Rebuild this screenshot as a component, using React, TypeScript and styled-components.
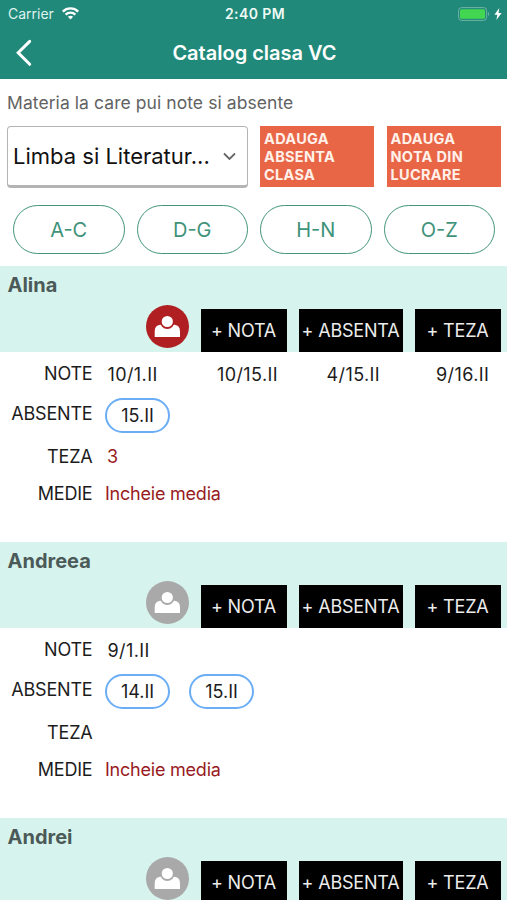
import React from 'react';
import styled, { createGlobalStyle } from 'styled-components';

const GlobalStyle = createGlobalStyle`
  * { box-sizing: border-box; }
  body {
    margin: 0;
    background: #fff;
    font-family: Inter, 'Liberation Sans', sans-serif;
    color: #1c1c1c;
  }
  button { font-family: inherit; cursor: pointer; }
`;

const Screen = styled.div`
  width: 507px;
  height: 900px;
  overflow: hidden;
`;

const Header = styled.header`
  height: 79px;
  background: #218979;
  color: #fff;
`;

const StatusBar = styled.div`
  display: grid;
  grid-template-columns: 1fr auto 1fr;
  align-items: center;
  height: 27px;
  padding: 0 5px 0 8px;
  font-size: 14px;
  line-height: 27px;
`;

const Carrier = styled.div`
  display: flex;
  align-items: center;
  gap: 8px;
  color: #dff3ee;
`;

const Clock = styled.div`
  font-weight: 600;
  letter-spacing: 0.4px;
  color: #eefaf6;
`;

const Power = styled.div`
  display: flex;
  align-items: center;
  justify-content: flex-end;
  gap: 4px;
`;

const NavBar = styled.div`
  display: grid;
  grid-template-columns: 61px 1fr 59px;
  align-items: center;
  height: 51px;
`;

const BackButton = styled.button`
  display: flex;
  padding: 0 0 0 14px;
  border: 0;
  background: none;
`;

const Title = styled.h1`
  margin: 0;
  text-align: center;
  font-size: 20px;
  font-weight: 600;
  line-height: 24px;
`;

const Hint = styled.p`
  margin: 0;
  padding: 13px 7px 0;
  height: 46.5px;
  font-size: 17.5px;
  line-height: 22px;
  letter-spacing: 0.07px;
  color: #636363;
`;

const Controls = styled.div`
  display: flex;
  gap: 12.5px;
  height: 62px;
  padding: 0 6.5px 0 7px;
`;

const SubjectSelect = styled.button`
  display: flex;
  align-items: center;
  justify-content: space-between;
  width: 240.5px;
  padding: 1px 11px 0 5px;
  border: 1px solid #b4b4b4;
  border-bottom-width: 3px;
  border-radius: 4px;
  background: #fff;
  color: #111;
  font-size: 22px;
`;

const ClassAction = styled.button`
  width: 114px;
  height: 61px;
  padding: 1px 4px 0;
  border: 0;
  background: #e86646;
  color: #fff1ea;
  text-align: left;
  font-size: 14.5px;
  font-weight: 700;
  line-height: 18px;
  letter-spacing: 0.32px;
`;

const LetterFilter = styled.nav`
  display: grid;
  grid-template-columns: repeat(4, 111.5px);
  gap: 12px;
  padding: 17.5px 0 12px 13px;
`;

const LetterRange = styled.button`
  height: 49px;
  padding: 0;
  border: 1px solid #419579;
  border-radius: 25px;
  background: #fff;
  color: #3f927a;
  font-size: 20px;
`;

const StudentBlock = styled.section`
  height: 276px;
`;

const StudentHeader = styled.div`
  display: flex;
  flex-direction: column;
  justify-content: space-between;
  height: 86px;
  padding: 7px 6.5px 0 7.5px;
  background: #d7f3ed;
`;

const StudentName = styled.h2`
  margin: 0;
  font-size: 20px;
  font-weight: 700;
  line-height: 24px;
  color: #4b5a58;
`;

const StudentActions = styled.div`
  display: flex;
  justify-content: flex-end;
  gap: 12px;
`;

const Avatar = styled.button<{ $active: boolean }>`
  display: flex;
  align-items: center;
  justify-content: center;
  width: 43px;
  height: 43px;
  margin-top: -4px;
  padding: 0;
  border: 0;
  border-radius: 50%;
  color: ${(p) => (p.$active ? '#b02023' : '#a9a9a9')};
  background: currentColor;
`;

const AddButton = styled.button<{ $width: number }>`
  width: ${(p) => p.$width}px;
  height: 43px;
  padding: 0 0 1px;
  border: 0;
  background: #000;
  color: #ececec;
  font-size: 18px;
  letter-spacing: -0.2px;
  white-space: nowrap;
`;

const Record = styled.div<{ $height: number }>`
  display: grid;
  grid-template-columns: 92.5px 1fr;
  column-gap: 12.5px;
  align-items: center;
  height: ${(p) => p.$height}px;
  font-size: 18px;
  line-height: 22px;
`;

const Label = styled.div<{ $raise?: number }>`
  padding-bottom: ${(p) => p.$raise ?? 0}px;
  text-align: right;
  letter-spacing: -0.2px;
`;

const Grades = styled.div`
  display: grid;
  grid-template-columns: repeat(4, 109.5px);
  padding: 3px 0 0 2.5px;
  letter-spacing: 0.4px;
  white-space: nowrap;
`;

const Chips = styled.div`
  display: flex;
  gap: 19px;
  padding-top: 1px;
`;

const Chip = styled.button`
  width: 65px;
  height: 35px;
  padding: 0;
  border: 2px solid #6baef6;
  border-radius: 18px;
  background: #fff;
  color: #1c1c1c;
  font-size: 18px;
`;

const RedValue = styled.div<{ $indent?: number }>`
  padding-left: ${(p) => p.$indent ?? 0}px;
  color: #981b1e;
  letter-spacing: -0.22px;
`;

interface Student {
  name: string;
  active: boolean;
  record?: { grades: string[]; absences: string[]; thesis: string };
}

const students: Student[] = [
  {
    name: 'Alina',
    active: true,
    record: { grades: ['10/1.II', '10/15.II', '4/15.II', '9/16.II'], absences: ['15.II'], thesis: '3' },
  },
  { name: 'Andreea', active: false, record: { grades: ['9/1.II'], absences: ['14.II', '15.II'], thesis: '' } },
  { name: 'Andrei', active: false },
];

const WifiIcon = () => (
  <svg width="17" height="13" viewBox="0 0 17 13" fill="none" stroke="#fff" strokeWidth="2.3">
    <path d="M0.8 4.6C5 0.4 12 0.4 16.2 4.6" />
    <path d="M3.6 7.7c2.8-2.7 7-2.7 9.8 0" />
    <path d="M8.5 12.4 5.9 9.8c1.5-1.4 3.7-1.4 5.2 0z" fill="#fff" stroke="none" />
  </svg>
);

const BatteryIcon = () => (
  <svg width="32" height="14" viewBox="0 0 32 14">
    <rect x="0.6" y="0.6" width="28" height="12.8" rx="3" fill="none" stroke="#6fb3a4" strokeWidth="1" />
    <rect x="2" y="2.2" width="25" height="9.6" rx="1.5" fill="#43d651" />
    <path d="M30 5c1.6.6 1.6 3.4 0 4z" fill="#6fb3a4" />
  </svg>
);

const BoltIcon = () => (
  <svg width="8" height="12" viewBox="0 0 8 12" fill="#fff">
    <path d="M5.3 0 0.4 6.7h2.9L2.4 12 7.6 4.9H4.5z" />
  </svg>
);

const BackIcon = () => (
  <svg width="18" height="28" viewBox="0 0 18 28" fill="none" stroke="#fff" strokeWidth="3" strokeLinecap="round">
    <path d="M15.7 2.4 4.200 13.800l11.500 11.500" />
  </svg>
);

const CaretIcon = () => (
  <svg width="13" height="9" viewBox="0 0 13 9" fill="none" stroke="#666" strokeWidth="1.8">
    <path d="M1 1.5 6.5 7 12 1.500" />
  </svg>
);

const PersonIcon = () => (
  <svg width="43" height="43" viewBox="0 0 43 43" fill="#fff">
    <path d="M8.700 32v-5.500c0-4 1.800-6.300 5.300-6.700h14.700c3.500.4 5.300 2.700 5.300 6.700V32z" />
    <circle cx="21.300" cy="16.500" r="6.500" stroke="currentColor" strokeWidth="1.800" />
  </svg>
);

export default function App() {
  return (
    <>
      <GlobalStyle />
      <Screen>
        <Header>
          <StatusBar>
            <Carrier>Carrier<WifiIcon /></Carrier>
            <Clock>2:40 PM</Clock>
            <Power><BatteryIcon /><BoltIcon /></Power>
          </StatusBar>
          <NavBar>
            <BackButton aria-label="Inapoi"><BackIcon /></BackButton>
            <Title>Catalog clasa VC</Title>
          </NavBar>
        </Header>
        <Hint>Materia la care pui note si absente</Hint>
        <Controls>
          <SubjectSelect>Limba si Literatur...<CaretIcon /></SubjectSelect>
          <ClassAction>ADAUGA<br />ABSENTA<br />CLASA</ClassAction>
          <ClassAction>ADAUGA<br />NOTA DIN<br />LUCRARE</ClassAction>
        </Controls>
        <LetterFilter>
          {['A-C', 'D-G', 'H-N', 'O-Z'].map((range) => (
            <LetterRange key={range}>{range}</LetterRange>
          ))}
        </LetterFilter>
        {students.map(({ name, active, record }) => (
          <StudentBlock key={name}>
            <StudentHeader>
              <StudentName>{name}</StudentName>
              <StudentActions>
                <Avatar $active={active} aria-label={name}><PersonIcon /></Avatar>
                <AddButton $width={86}>+ NOTA</AddButton>
                <AddButton $width={104}>+ ABSENTA</AddButton>
                <AddButton $width={86}>+ TEZA</AddButton>
              </StudentActions>
            </StudentHeader>
            {record && (
              <>
                <Record $height={43}>
                  <Label>NOTE</Label>
                  <Grades>{record.grades.map((g) => <span key={g}>{g}</span>)}</Grades>
                </Record>
                <Record $height={39}>
                  <Label $raise={1}>ABSENTE</Label>
                  <Chips>{record.absences.map((a) => <Chip key={a}>{a}</Chip>)}</Chips>
                </Record>
                <Record $height={46}>
                  <Label>TEZA</Label>
                  <RedValue $indent={2}>{record.thesis}</RedValue>
                </Record>
                <Record $height={27}>
                  <Label>MEDIE</Label>
                  <RedValue>Incheie media</RedValue>
                </Record>
              </>
            )}
          </StudentBlock>
        ))}
      </Screen>
    </>
  );
}
